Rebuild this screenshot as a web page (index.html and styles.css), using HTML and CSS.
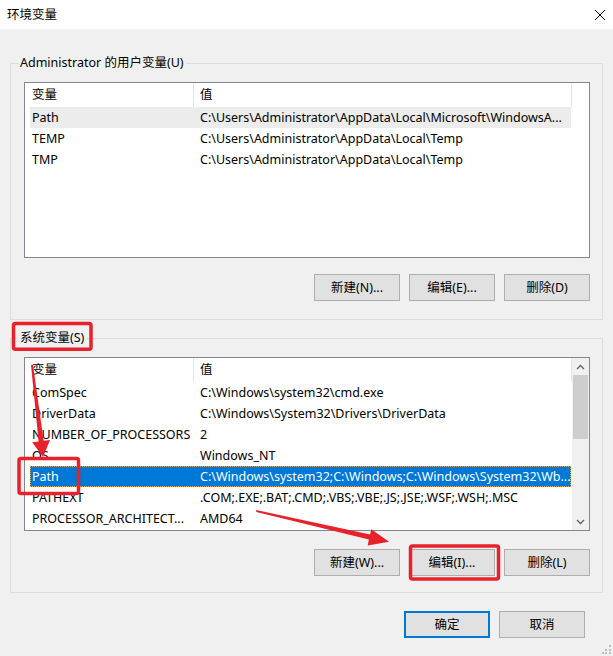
FILE: index.html
```html
<!DOCTYPE html>
<html lang="zh-CN">
<head>
<meta charset="utf-8">
<title>环境变量</title>
<link rel="stylesheet" href="styles.css">
</head>
<body>
<div class="window">
  <div class="titlebar">
    <span class="title">环境变量</span>
    <svg class="close" width="12" height="12" viewBox="0 0 12 12"><path d="M1 1 L11 11 M11 1 L1 11" stroke="#000" stroke-width="1" fill="none"/></svg>
  </div>
  <div class="content">
    <section class="group group-user">
      <div class="group-title">Administrator 的用户变量(U)</div>
      <div class="listbox listbox-user">
        <div class="list">
          <div class="list-header">
            <div class="hcell hcell-name">变量</div>
            <div class="hcell hcell-value">值</div>
          </div>
          <div class="row row-hover"><span class="cell-name">Path</span><span class="cell-value">C:\Users\Administrator\AppData\Local\Microsoft\WindowsA...</span></div>
          <div class="row"><span class="cell-name">TEMP</span><span class="cell-value">C:\Users\Administrator\AppData\Local\Temp</span></div>
          <div class="row"><span class="cell-name">TMP</span><span class="cell-value">C:\Users\Administrator\AppData\Local\Temp</span></div>
        </div>
      </div>
      <div class="buttons buttons-user">
        <button class="btn">新建(N)...</button>
        <button class="btn">编辑(E)...</button>
        <button class="btn">删除(D)</button>
      </div>
    </section>
    <section class="group group-system">
      <div class="group-title">系统变量(S)</div>
      <div class="listbox listbox-system">
        <div class="list">
          <div class="list-header">
            <div class="hcell hcell-name">变量</div>
            <div class="hcell hcell-value">值</div>
          </div>
          <div class="row"><span class="cell-name">ComSpec</span><span class="cell-value">C:\Windows\system32\cmd.exe</span></div>
          <div class="row"><span class="cell-name">DriverData</span><span class="cell-value">C:\Windows\System32\Drivers\DriverData</span></div>
          <div class="row"><span class="cell-name">NUMBER_OF_PROCESSORS</span><span class="cell-value">2</span></div>
          <div class="row"><span class="cell-name">OS</span><span class="cell-value">Windows_NT</span></div>
          <div class="row row-selected"><span class="cell-name">Path</span><span class="cell-value">C:\Windows\system32;C:\Windows;C:\Windows\System32\Wb...</span></div>
          <div class="row"><span class="cell-name">PATHEXT</span><span class="cell-value">.COM;.EXE;.BAT;.CMD;.VBS;.VBE;.JS;.JSE;.WSF;.WSH;.MSC</span></div>
          <div class="row"><span class="cell-name">PROCESSOR_ARCHITECT...</span><span class="cell-value">AMD64</span></div>
        </div>
        <div class="scrollbar">
          <div class="sb-arrow"><svg width="9" height="6" viewBox="0 0 9 6"><polyline points="1,5 4.5,1.5 8,5" fill="none" stroke="#606060" stroke-width="1.3"/></svg></div>
          <div class="sb-thumb"></div>
          <div class="sb-track"></div>
          <div class="sb-arrow"><svg width="9" height="6" viewBox="0 0 9 6"><polyline points="1,1 4.5,4.5 8,1" fill="none" stroke="#606060" stroke-width="1.3"/></svg></div>
        </div>
      </div>
      <div class="buttons buttons-system">
        <button class="btn">新建(W)...</button>
        <button class="btn">编辑(I)...</button>
        <button class="btn">删除(L)</button>
      </div>
    </section>
  </div>
  <div class="footer">
    <button class="btn btn-default">确定</button>
    <button class="btn">取消</button>
  </div>
  <div class="grip">
    <i style="left:7px;top:0"></i>
    <i style="left:3px;top:4px"></i><i style="left:7px;top:4px"></i>
    <i style="left:0;top:7px"></i><i style="left:3px;top:7px"></i><i style="left:7px;top:7px"></i>
  </div>
</div>
<svg class="annotations" width="613" height="656" viewBox="0 0 613 656">
  <g fill="none" stroke="#e8212a" stroke-width="3.5" stroke-linejoin="round">
    <rect x="13.5" y="323.5" width="77.5" height="25.8" rx="2"/>
    <rect x="19" y="458.5" width="59.5" height="35" rx="2"/>
    <rect x="410.5" y="546" width="88" height="33" rx="2"/>
  </g>
  <g fill="#e8212a">
    <polygon points="31,365 33,364.8 43.6,440.8 50,440 43,457 32.2,442.2 38.6,441.4"/>
    <polygon points="256,510 256.4,512 368.9,539.6 367.7,545.5 389,541.7 371.3,529.2 370.1,534.6"/>
  </g>
</svg>
</body>
</html>
```

FILE: styles.css
```css
* { box-sizing: border-box; }

html, body {
  margin: 0;
  padding: 0;
}

body {
  width: 613px;
  height: 656px;
  overflow: hidden;
  position: relative;
  background: #f0f0f0;
  color: #000;
  font-family: "Noto Sans", "Noto Sans CJK SC", sans-serif;
  font-size: 12.5px;
  line-height: 16px;
}

.window {
  position: relative;
  width: 613px;
  height: 656px;
}

.titlebar {
  height: 29px;
  background: #fff;
  display: flex;
  align-items: center;
  justify-content: space-between;
  padding: 0 7px;
}

.title {
  font-size: 12.5px;
}

.close {
  display: block;
}

.content {
  padding: 0 10px;
}

.group {
  border: 1px solid #dcdcdc;
  padding: 0 12px 18px 13px;
}

.group-user {
  margin-top: 34px;
}

.group-system {
  margin-top: 18px;
  padding-bottom: 16px;
}

.group-title {
  width: fit-content;
  margin: -9px 0 0 -6px;
  padding: 0 2px;
  background: #f0f0f0;
  line-height: 16px;
}

.listbox {
  margin-top: 11px;
  border: 1px solid #828790;
  background: #fff;
  display: flex;
}

.listbox-user {
  height: 176px;
}

.listbox-system {
  height: 174px;
}

.list {
  flex: 1;
  overflow: hidden;
}

.list-header {
  display: flex;
  height: 24px;
}

.hcell {
  height: 24px;
  line-height: 24px;
  border-right: 1px solid #e5e5e5;
}

.hcell-name {
  width: 169px;
  padding-left: 7px;
}

.hcell-value {
  width: 378px;
  padding-left: 6px;
}

.row {
  display: grid;
  grid-template-columns: 163px 1fr;
  height: 21px;
  width: 541px;
  margin-left: 5px;
  align-items: center;
  white-space: nowrap;
}

.cell-name {
  padding-left: 2px;
  overflow: hidden;
}

.cell-value {
  padding-left: 7px;
  overflow: hidden;
}

.row-hover {
  background: #ececec;
}

.row-selected {
  background: #0078d7;
  color: #fff;
  border: 1px dotted #f7a21b;
}

.row-selected .cell-name {
  padding-left: 1px;
}

.row-selected .cell-value {
  padding-left: 6px;
}

.scrollbar {
  width: 17px;
  display: flex;
  flex-direction: column;
  background: #f0f0f0;
}

.sb-arrow {
  height: 17px;
  display: flex;
  align-items: center;
  justify-content: center;
}

.sb-thumb {
  height: 64px;
  margin: 0 1px;
  background: #cdcdcd;
}

.sb-track {
  flex: 1;
}

.buttons {
  display: flex;
  justify-content: flex-end;
  gap: 9px;
}

.buttons-user {
  margin-top: 16px;
}

.buttons-system {
  margin-top: 18px;
}

.btn {
  width: 86px;
  height: 27px;
  padding: 0;
  border: 1px solid #adadad;
  background: #e1e1e1;
  color: #000;
  font-family: inherit;
  font-size: 12.5px;
  line-height: 16px;
}

.btn-default {
  border: 2px solid #0078d7;
}

.footer {
  display: flex;
  justify-content: flex-end;
  gap: 9px;
  margin-top: 18px;
  padding-right: 28px;
}

.grip {
  position: absolute;
  right: 2px;
  bottom: 2px;
  width: 9px;
  height: 9px;
}

.grip i {
  position: absolute;
  width: 2px;
  height: 2px;
  background: #bcbcbc;
}

.annotations {
  position: absolute;
  left: 0;
  top: 0;
  pointer-events: none;
}
```
